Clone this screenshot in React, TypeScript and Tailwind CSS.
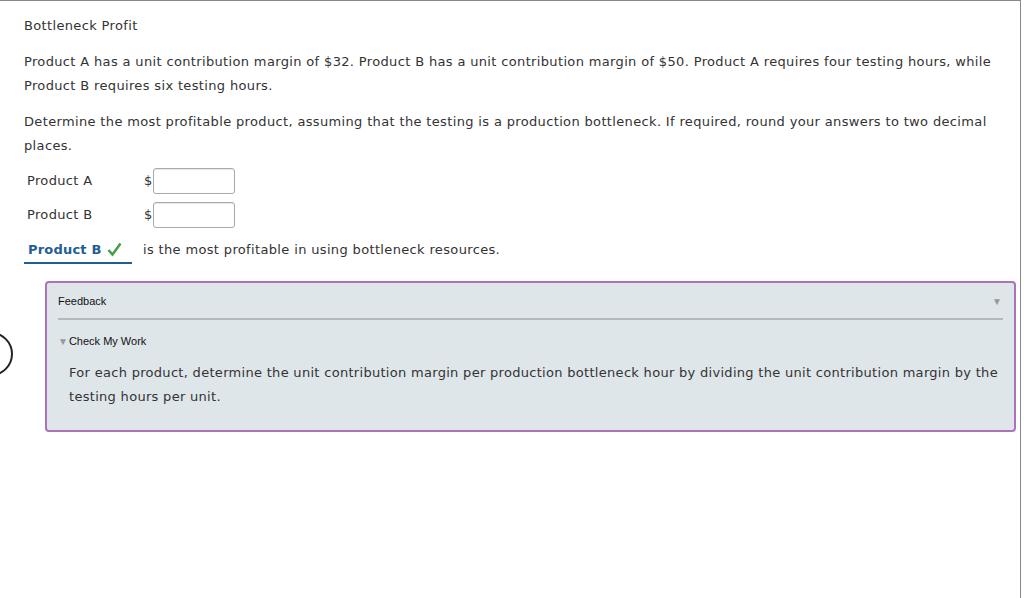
export default function App() {
  return (
    <div className="relative w-[1024px] h-[598px] bg-white overflow-hidden text-[#333] tracking-[0.35px]" style={{ fontFamily: '"DejaVu Sans", Verdana, sans-serif' }}>
      <div className="absolute -left-[31px] top-[332px] w-[44px] h-[44px] rounded-full border-2 border-[#222]" />
      <div className="w-[1021px] h-[598px] border-t border-r border-[#888] pl-[24px] pr-[18px]">
        <div className="text-[13px] leading-[24px] pt-[13px]">Bottleneck Profit</div>
        <p className="text-[13px] leading-[24px] mt-[12px]">
          Product A has a unit contribution margin of $32. Product B has a unit contribution margin of $50. Product A requires four testing hours, while Product B requires six testing hours.
        </p>
        <p className="text-[13px] leading-[24px] mt-[12px]">
          Determine the most profitable product, assuming that the testing is a production bottleneck. If required, round your answers to two decimal places.
        </p>
        <div className="mt-[10px] flex flex-col gap-[9px] text-[13px]">
          <div className="flex items-center h-[25px]">
            <span className="w-[120px] pl-[3px]">Product A</span>
            <span className="w-[9px]">$</span>
            <div className="w-[82px] h-[26px] border border-[#aaa] rounded-[3px] bg-white shadow-[inset_0_1px_1px_rgba(0,0,0,0.1)]" />
          </div>
          <div className="flex items-center h-[25px]">
            <span className="w-[120px] pl-[3px]">Product B</span>
            <span className="w-[9px]">$</span>
            <div className="w-[82px] h-[26px] border border-[#aaa] rounded-[3px] bg-white shadow-[inset_0_1px_1px_rgba(0,0,0,0.1)]" />
          </div>
        </div>
        <div className="mt-[9px] flex items-center text-[13px] h-[28px]">
          <div className="w-[108px] h-[28px] flex items-center border-b-2 border-[#1d5e94] pl-[4px] pt-[1px] font-bold text-[#1d5e94] tracking-[0.2px]">
            Product B
            <svg className="ml-[5px]" width="15" height="15" viewBox="0 0 15 15">
              <path d="M1.5 8 L5.5 12.5 L13.5 1.5" fill="none" stroke="#43a047" strokeWidth="2.5" />
            </svg>
          </div>
          <span className="ml-[11px] -mt-[1px]">is the most profitable in using bottleneck resources.</span>
        </div>
        <div className="mt-[17px] ml-[21px] w-[971px] h-[151px] border-2 border-[#ad72b8] rounded-[4px] bg-[#dfe6ea] px-[11px] tracking-normal">
          <div className="flex items-center justify-between h-[37px] border-b-2 border-[#b3b8bb] pt-[1px]" style={{ fontFamily: '"Liberation Sans", Arial, sans-serif' }}>
            <span className="text-[11px] text-[#111]">Feedback</span>
            <span className="text-[10px] text-[#999] pr-[1px]">▼</span>
          </div>
          <div className="flex items-center mt-[13px] text-[11px] text-[#111]" style={{ fontFamily: '"Liberation Sans", Arial, sans-serif' }}>
            <span className="text-[10px] text-[#999] mr-[1px]">▼</span>
            Check My Work
          </div>
          <p className="ml-[11px] -mr-[2px] mt-[11px] text-[13px] leading-[24px] tracking-[0.3px]">
            For each product, determine the unit contribution margin per production bottleneck hour by dividing the unit contribution margin by the testing hours per unit.
          </p>
        </div>
      </div>
    </div>
  );
}
